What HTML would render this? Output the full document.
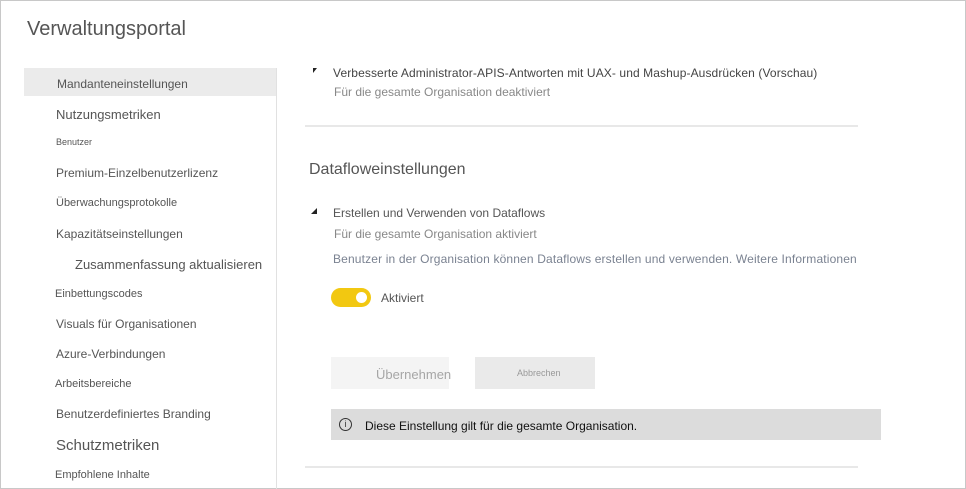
<!DOCTYPE html>
<html><head><style>
body{margin:0;width:966px;height:489px;overflow:hidden;background:#fff;font-family:"Liberation Sans",sans-serif;position:relative}
.frame{position:absolute;left:0;top:0;width:964px;height:487px;border:1px solid #c8c8c8}
.a{position:absolute;white-space:nowrap}
.nav{color:#555;font-size:12px}
</style></head><body>
<div class="frame"></div>
<div class="a" style="left:27px;top:18px;font-size:20px;color:#555">Verwaltungsportal</div>
<div class="a" style="left:24px;top:68px;width:252px;height:28px;background:#ebebeb"></div>
<div class="a" style="left:276px;top:68px;width:1px;height:421px;background:#e1e1e1"></div>
<div class="a nav" style="left:57px;top:77px">Mandanteneinstellungen</div>
<div class="a nav" style="left:56px;top:107px;font-size:13px">Nutzungsmetriken</div>
<div class="a nav" style="left:56px;top:137px;font-size:9px">Benutzer</div>
<div class="a nav" style="left:56px;top:166px">Premium-Einzelbenutzerlizenz</div>
<div class="a nav" style="left:56px;top:197px;font-size:11px">Überwachungsprotokolle</div>
<div class="a nav" style="left:56px;top:227px">Kapazitätseinstellungen</div>
<div class="a nav" style="left:75px;top:257px;font-size:13px">Zusammenfassung aktualisieren</div>
<div class="a nav" style="left:55px;top:288px;font-size:11px">Einbettungscodes</div>
<div class="a nav" style="left:56px;top:317px">Visuals für Organisationen</div>
<div class="a nav" style="left:56px;top:347px">Azure-Verbindungen</div>
<div class="a nav" style="left:55px;top:378px;font-size:11px">Arbeitsbereiche</div>
<div class="a nav" style="left:56px;top:407px">Benutzerdefiniertes Branding</div>
<div class="a nav" style="left:56px;top:437px;font-size:15px">Schutzmetriken</div>
<div class="a nav" style="left:55px;top:469px;font-size:11px">Empfohlene Inhalte</div>

<div class="a" style="left:313px;top:68px;width:0;height:0;border-left:4px solid #222;border-bottom:5px solid transparent"></div>
<div class="a" style="left:333px;top:66px;font-size:12px;color:#444;letter-spacing:0.1px">Verbesserte Administrator-APIS-Antworten mit UAX- und Mashup-Ausdrücken (Vorschau)</div>
<div class="a" style="left:334px;top:85px;font-size:12px;color:#888">Für die gesamte Organisation deaktiviert</div>
<div class="a" style="left:305px;top:125px;width:553px;height:2px;background:#e8e8e8"></div>
<div class="a" style="left:309px;top:161px;font-size:16px;color:#555">Dataflowe­instellungen</div>
<div class="a" style="left:311px;top:208px;width:0;height:0;border-left:6px solid transparent;border-bottom:6px solid #222"></div>
<div class="a" style="left:333px;top:206px;font-size:12px;color:#555">Erstellen und Verwenden von Dataflows</div>
<div class="a" style="left:334px;top:227px;font-size:12px;color:#888">Für die gesamte Organisation aktiviert</div>
<div class="a" style="left:333px;top:252px;font-size:12px;color:#7a8291;letter-spacing:0.15px">Benutzer in der Organisation können Dataflows erstellen und verwenden. Weitere Informationen</div>
<div class="a" style="left:331px;top:288px;width:40px;height:19px;border-radius:10px;background:#f2c811"></div>
<div class="a" style="left:356px;top:292px;width:11px;height:11px;border-radius:50%;background:#fff"></div>
<div class="a" style="left:381px;top:291px;font-size:12px;color:#555">Aktiviert</div>
<div class="a" style="left:331px;top:357px;width:118px;height:32px;background:#f4f4f4"></div>
<div class="a" style="left:376px;top:367px;font-size:13px;color:#a6a6a6">Übernehmen</div>
<div class="a" style="left:475px;top:357px;width:120px;height:32px;background:#eaeaea"></div>
<div class="a" style="left:517px;top:368px;font-size:9px;color:#999">Abbrechen</div>
<div class="a" style="left:331px;top:409px;width:550px;height:31px;background:#dcdcdc"></div>
<div class="a" style="left:339px;top:418px;width:11px;height:11px;border:1px solid #333;border-radius:50%;font-size:9px;line-height:11px;text-align:center;color:#333">i</div>
<div class="a" style="left:365px;top:419px;font-size:12px;color:#111">Diese Einstellung gilt für die gesamte Organisation.</div>
<div class="a" style="left:305px;top:466px;width:553px;height:2px;background:#e8e8e8"></div>
</body></html>
